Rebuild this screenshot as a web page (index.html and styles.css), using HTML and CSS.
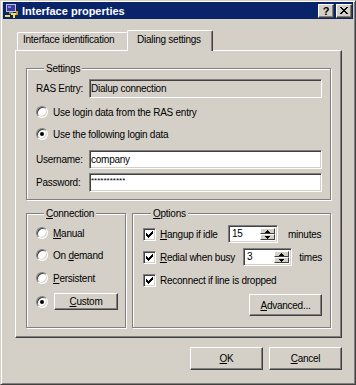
FILE: index.html
```html
<!DOCTYPE html>
<html lang="en">
<head>
  <meta charset="UTF-8">
  <title>Interface properties</title>
  <link rel="stylesheet" href="styles.css">
</head>
<body>
  <div class="window">
    <div class="titlebar">
      <svg class="app-icon" width="16" height="16" viewBox="0 0 16 16" shape-rendering="crispEdges">
        <rect x="2" y="1" width="10" height="8" fill="#c0c0e0"/>
        <rect x="3" y="2" width="8" height="6" fill="#3a3a9a"/>
        <rect x="4" y="3" width="3" height="2" fill="#8080ff"/>
        <rect x="5" y="9" width="4" height="2" fill="#808080"/>
        <rect x="7" y="10" width="6" height="2" fill="#f0e040"/>
        <rect x="9" y="12" width="2" height="3" fill="#f0e040"/>
        <rect x="12" y="8" width="2" height="4" fill="#c0a020"/>
        <rect x="1" y="12" width="5" height="2" fill="#f0e040"/>
      </svg>
      <span class="title">Interface properties</span>
      <span class="cap-btn help">?</span>
      <span class="cap-btn close">
        <svg width="8" height="7" viewBox="0 0 8 7" shape-rendering="crispEdges">
          <path d="M0 0h2v1h1v1h2V1h1V0h2v1H7v1H6v1H5v1h1v1h1v1h1v1H6V6H5V5H3v1H2v1H0V6h1V5h1V4h1V3H2V2H1V1H0z"/>
        </svg>
      </span>
    </div>

    <div class="client">
      <div class="tabs">
        <div class="tab">Interface identification</div>
        <div class="tab active">Dialing settings</div>
      </div>

      <div class="panel">
        <fieldset class="group settings">
          <legend>Settings</legend>
          <div class="field-row ras-row">
            <label class="field-label">RAS Entry:</label>
            <input class="edit readonly" type="text" value="Dialup connection" readonly>
          </div>
          <div class="choice first-choice"><span class="radio"></span>Use login data from the RAS entry</div>
          <div class="choice second-choice"><span class="radio checked"></span>Use the following login data</div>
          <div class="field-row user-row">
            <label class="field-label">Username:</label>
            <input class="edit" type="text" value="company">
          </div>
          <div class="field-row pass-row">
            <label class="field-label">Password:</label>
            <input class="edit secret" type="text" value="***********">
          </div>
        </fieldset>

        <div class="lower">
          <fieldset class="group connection">
            <legend><u>C</u>onnection</legend>
            <div class="choice conn-1"><span class="radio"></span><span><u>M</u>anual</span></div>
            <div class="choice conn-2"><span class="radio"></span><span>On <u>d</u>emand</span></div>
            <div class="choice conn-3"><span class="radio"></span><span><u>P</u>ersistent</span></div>
            <div class="choice conn-4"><span class="radio checked"></span><button class="btn custom-btn"><u>C</u>ustom</button></div>
          </fieldset>

          <fieldset class="group options">
            <legend><u>O</u>ptions</legend>
            <div class="option-row">
              <span class="check"><svg width="7" height="7" viewBox="0 0 7 7" shape-rendering="crispEdges"><path d="M6 0h1v1H6zM5 1h2v1H5zM0 2h1v1H0zM4 2h3v1H4zM0 3h2v1H0zM3 3h3v1H3zM0 4h5v1H0zM1 5h3v1H1zM2 6h1v1H2z"/></svg></span>
              <span class="opt-label idle-label"><u>H</u>angup if idle</span>
              <span class="spin"><span class="spin-value">15</span><span class="updown"><span class="arrow"><svg width="5" height="3" shape-rendering="crispEdges"><path d="M2 0h1v1H2zM1 1h3v1H1zM0 2h5v1H0z"/></svg></span><span class="arrow"><svg width="5" height="3" shape-rendering="crispEdges"><path d="M0 0h5v1H0zM1 1h3v1H1zM2 2h1v1H2z"/></svg></span></span></span>
              <span class="unit minutes">minutes</span>
            </div>
            <div class="option-row">
              <span class="check"><svg width="7" height="7" viewBox="0 0 7 7" shape-rendering="crispEdges"><path d="M6 0h1v1H6zM5 1h2v1H5zM0 2h1v1H0zM4 2h3v1H4zM0 3h2v1H0zM3 3h3v1H3zM0 4h5v1H0zM1 5h3v1H1zM2 6h1v1H2z"/></svg></span>
              <span class="opt-label redial-label"><u>R</u>edial when busy</span>
              <span class="spin"><span class="spin-value">3</span><span class="updown"><span class="arrow"><svg width="5" height="3" shape-rendering="crispEdges"><path d="M2 0h1v1H2zM1 1h3v1H1zM0 2h5v1H0z"/></svg></span><span class="arrow"><svg width="5" height="3" shape-rendering="crispEdges"><path d="M0 0h5v1H0zM1 1h3v1H1zM2 2h1v1H2z"/></svg></span></span></span>
              <span class="unit times">times</span>
            </div>
            <div class="option-row">
              <span class="check"><svg width="7" height="7" viewBox="0 0 7 7" shape-rendering="crispEdges"><path d="M6 0h1v1H6zM5 1h2v1H5zM0 2h1v1H0zM4 2h3v1H4zM0 3h2v1H0zM3 3h3v1H3zM0 4h5v1H0zM1 5h3v1H1zM2 6h1v1H2z"/></svg></span>
              <span class="opt-label">Reconnect if line is dropped</span>
            </div>
            <div class="advanced-row">
              <button class="btn advanced-btn"><u>A</u>dvanced...</button>
            </div>
          </fieldset>
        </div>
      </div>

      <div class="buttons">
        <button class="btn dialog-btn"><u>O</u>K</button>
        <button class="btn dialog-btn"><u>C</u>ancel</button>
      </div>
    </div>
  </div>
</body>
</html>
```

FILE: styles.css
```css
* {
  box-sizing: border-box;
}
body {
  margin: 0;
  background-color: #d4d0c8;
  font-family: "Liberation Sans", Arial, sans-serif;
  font-size: 10px;
  letter-spacing: -0.25px;
  color: #000;
}
.window {
  width: 356px;
  height: 385px;
  border: 1px solid;
  border-color: #d4d0c8 #404040 #404040 #d4d0c8;
  box-shadow: inset 1px 1px 0 #fff, inset -1px -1px 0 #808080;
  padding: 1px 2px 2px 2px;
}
.titlebar {
  height: 17px;
  background-color: #0a246a;
  color: #fff;
  display: flex;
  align-items: center;
  padding: 0 1px 0 1px;
}
.app-icon {
  margin-right: 2px;
}
.title {
  font-weight: bold;
  font-size: 11px;
  letter-spacing: 0;
}
.cap-btn {
  width: 16px;
  height: 14px;
  background-color: #d4d0c8;
  border: 1px solid;
  border-color: #fff #404040 #404040 #fff;
  box-shadow: inset -1px -1px 0 #808080;
  color: #000;
  display: flex;
  align-items: center;
  justify-content: center;
  font-weight: bold;
  font-size: 11px;
  letter-spacing: 0;
}
.help {
  margin-left: auto;
  margin-right: 2px;
}
.client {
  padding: 11px 11px 0 12px;
}

/* tabs */
.tabs {
  display: flex;
  align-items: flex-end;
  height: 20px;
  padding-left: 2px;
}
.tab {
  position: relative;
  height: 18px;
  width: 112px;
  padding-left: 5px;
  line-height: 14px;
  border-top: 1px solid #fff;
  border-left: 1px solid #fff;
  border-right: 1px solid #404040;
  box-shadow: inset -1px 0 0 #808080;
  border-radius: 2px 2px 0 0;
  background-color: #d4d0c8;
  white-space: nowrap;
}
.tab.active {
  z-index: 2;
  height: 21px;
  width: 86px;
  margin-left: -2px;
  margin-bottom: -1px;
  padding-top: 2px;
  padding-left: 9px;
}
.panel {
  width: 327px;
  height: 288px;
  border: 1px solid;
  border-color: #fff #404040 #404040 #fff;
  box-shadow: inset -1px -1px 0 #808080;
  padding: 11px 10px 0 10px;
}

/* group boxes */
.group {
  margin: 0;
  border: 1px solid #808080;
  box-shadow: inset 1px 1px 0 #fff, 1px 1px 0 #fff;
  min-width: 0;
}
.group legend {
  margin-left: 8px;
  padding: 0 2px;
  line-height: 13px;
  background-color: #d4d0c8;
}
.settings {
  padding: 4px 8px 7px 9px;
}
.field-row {
  display: flex;
  align-items: center;
  height: 19px;
}
.field-label {
  width: 53px;
  flex: none;
}
.edit {
  flex: 1;
  min-width: 0;
  height: 19px;
  margin: 0;
  padding: 0 1px;
  font: inherit;
  letter-spacing: inherit;
  color: #000;
  background-color: #fff;
  border: 1px solid;
  border-color: #808080 #fff #fff #808080;
  box-shadow: inset 1px 1px 0 #404040, inset -1px -1px 0 #d4d0c8;
  outline: none;
}
.edit.readonly {
  background-color: #d4d0c8;
}
.edit.secret {
  font-size: 8px;
  letter-spacing: 0;
  padding-bottom: 4px;
}
.choice {
  display: flex;
  align-items: center;
  height: 14px;
}
.first-choice {
  margin-top: 7px;
}
.second-choice {
  margin-top: 8px;
}
.user-row {
  margin-top: 9px;
}
.pass-row {
  margin-top: 4px;
}
.radio {
  position: relative;
  flex: none;
  width: 12px;
  height: 12px;
  margin-right: 5px;
  border-radius: 50%;
  border: 1px solid;
  border-color: #808080 #fff #fff #808080;
  box-shadow: inset 1px 1px 0 #404040, inset -1px -1px 0 #d4d0c8;
  background-color: #fff;
}
.radio.checked::after {
  content: "";
  position: absolute;
  left: 3px;
  top: 3px;
  width: 4px;
  height: 4px;
  border-radius: 50%;
  background-color: #000;
}

/* lower row */
.lower {
  display: flex;
  gap: 6px;
  margin-top: 7px;
}
.connection {
  width: 100px;
  height: 121px;
  padding: 6px 4px 0 9px;
}
.conn-2 {
  margin-top: 8px;
}
.conn-3 {
  margin-top: 9px;
}
.conn-4 {
  margin-top: 8px;
  height: 17px;
}
.options {
  width: 199px;
  height: 121px;
  padding: 5px 8px 0 10px;
}
.btn {
  margin: 0;
  padding: 0;
  font: inherit;
  letter-spacing: inherit;
  color: #000;
  background-color: #d4d0c8;
  border: 1px solid;
  border-color: #fff #404040 #404040 #fff;
  box-shadow: inset -1px -1px 0 #808080;
  text-align: center;
}
.custom-btn {
  width: 64px;
  height: 17px;
  margin-left: 1px;
}
.option-row {
  display: flex;
  align-items: center;
  height: 18px;
  margin-bottom: 5px;
  white-space: nowrap;
}
.check {
  flex: none;
  width: 13px;
  height: 13px;
  margin-right: 4px;
  display: flex;
  align-items: center;
  justify-content: center;
  border: 1px solid;
  border-color: #808080 #fff #fff #808080;
  box-shadow: inset 1px 1px 0 #404040, inset -1px -1px 0 #d4d0c8;
  background-color: #fff;
}
.idle-label {
  width: 68px;
}
.redial-label {
  width: 84px;
}
.spin {
  display: flex;
  width: 50px;
  height: 18px;
  border: 1px solid;
  border-color: #808080 #fff #fff #808080;
  box-shadow: inset 1px 1px 0 #404040, inset -1px -1px 0 #d4d0c8;
  background-color: #fff;
  padding: 1px;
}
.spin-value {
  flex: 1;
  padding-left: 2px;
  line-height: 14px;
}
.updown {
  display: flex;
  flex-direction: column;
  width: 15px;
  margin: 1px 1px 1px 0;
}
.arrow {
  flex: 1;
  display: flex;
  align-items: center;
  justify-content: center;
  background-color: #d4d0c8;
  border: 1px solid;
  border-color: #fff #404040 #404040 #fff;
}
.minutes {
  margin-left: 10px;
}
.times {
  margin-left: 7px;
}
.advanced-row {
  display: flex;
  justify-content: flex-end;
  margin-top: 1px;
}
.advanced-btn {
  width: 73px;
  height: 22px;
}

/* dialog buttons */
.buttons {
  display: flex;
  justify-content: flex-end;
  gap: 6px;
  margin-top: 9px;
}
.dialog-btn {
  width: 73px;
  height: 23px;
}
```
